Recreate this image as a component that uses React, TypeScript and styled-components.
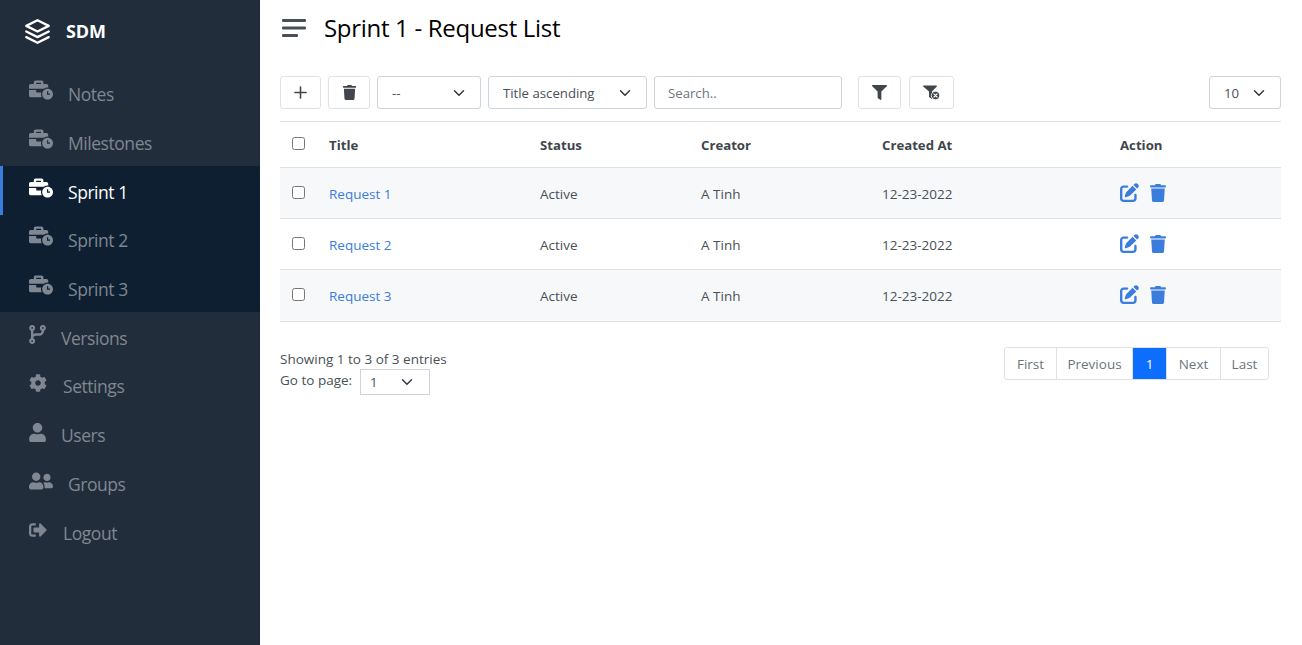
import React from "react";
import styled, { createGlobalStyle } from "styled-components";
import {
	FaBusinessTime,
	FaCog,
	FaFilter,
	FaSignOutAlt,
	FaTrash,
	FaUser,
	FaUserFriends,
} from "react-icons/fa";
import { FaCodeBranch, FaPenToSquare } from "react-icons/fa6";
import { FiLayers, FiPlus } from "react-icons/fi";

const chevron = `url("data:image/svg+xml,%3csvg xmlns='http://www.w3.org/2000/svg' viewBox='0 0 16 16'%3e%3cpath fill='none' stroke='%23343a40' stroke-linecap='round' stroke-linejoin='round' stroke-width='2' d='m2 5 6 6 6-6'/%3e%3c/svg%3e")`;

const GlobalStyle = createGlobalStyle`
	html, body {
		margin: 0;
		padding: 0;
		height: 100%;
		background: #fff;
	}
	body {
		font-family: "Open Sans", "Noto Sans", sans-serif;
		font-size: 13.5px;
		color: #495057;
	}
	* {
		box-sizing: border-box;
	}
`;

const Layout = styled.div`
	display: flex;
	height: 645px;
	overflow: hidden;
`;

const Sidebar = styled.nav`
	width: 260px;
	flex-shrink: 0;
	background: #222d3b;
	display: flex;
	flex-direction: column;
`;

const Brand = styled.div`
	height: 69px;
	padding: 0 0 7px 24px;
	display: flex;
	align-items: center;
	gap: 15px;
	color: #fff;
	font-size: 18px;
	font-weight: 700;
	letter-spacing: -0.1px;
	svg {
		width: 27px;
		height: 27px;
	}
`;

const SubMenu = styled.div`
	background: #0d1f30;
`;

const MenuItem = styled.a<{ $active?: boolean; $gap: number; $inset?: number }>`
	height: 48.7px;
	padding: 2px 0 0 ${(p) => p.$inset ?? 29}px;
	display: flex;
	align-items: center;
	gap: ${(p) => p.$gap}px;
	font-size: 17.5px;
	letter-spacing: -0.45px;
	color: ${(p) => (p.$active ? "#fff" : "#7f8792")};
	box-shadow: ${(p) => (p.$active ? "inset 3px 0 0 #3b7ddd" : "none")};
	svg {
		flex-shrink: 0;
		position: relative;
		top: -3px;
	}
`;

const BriefcaseIcon = styled(FaBusinessTime)`
	margin-top: -2px;
`;

const Main = styled.main`
	flex: 1;
	min-width: 0;
	padding: 0 21px 0 20px;
`;

const PageHeader = styled.header`
	height: 76px;
	padding: 0 0 21px 2px;
	display: flex;
	align-items: center;
	gap: 18px;
`;

const Hamburger = styled.svg`
	width: 24px;
	height: 18px;
	flex-shrink: 0;
`;

const PageTitle = styled.h1`
	margin: 0;
	font-size: 24px;
	font-weight: 400;
	letter-spacing: -0.3px;
	color: #000;
`;

const Toolbar = styled.div`
	height: 45px;
	display: flex;
	align-items: flex-start;
	gap: 7px;
`;

const IconButton = styled.button<{ $width: number }>`
	width: ${(p) => p.$width}px;
	height: 33px;
	padding: 0;
	display: flex;
	align-items: center;
	justify-content: center;
	background: #fff;
	border: 1px solid #dee2e6;
	border-radius: 3px;
	color: #41464d;
`;

const FilterGroup = styled.div`
	display: flex;
	gap: 8px;
	margin-left: 9px;
`;

const Select = styled.select<{ $width: number }>`
	appearance: none;
	width: ${(p) => p.$width}px;
	height: 33px;
	padding: 0 14px;
	background: #fff ${chevron} no-repeat right 15px center / 12px 12px;
	border: 1px solid #ced4da;
	border-radius: 3px;
	font-family: inherit;
	font-size: 13.2px;
	color: #495057;
`;

const SearchInput = styled.input`
	width: 188px;
	height: 33px;
	padding: 0 13px;
	border: 1px solid #ced4da;
	border-radius: 3px;
	font-family: inherit;
	font-size: 13.2px;
	color: #495057;
	&::placeholder {
		color: #6c757d;
		opacity: 1;
	}
`;

const PageSize = styled(Select)`
	margin-left: auto;
`;

const Table = styled.table`
	width: 100%;
	table-layout: fixed;
	border-collapse: collapse;
	border-top: 1px solid #dee2e6;
`;

const HeadCell = styled.th`
	height: 46px;
	padding: 0 12px;
	text-align: left;
	font-size: 13.2px;
	font-weight: 700;
	color: #3f454c;
	border-bottom: 1px solid #dee2e6;
`;

const Cell = styled.td`
	height: 51px;
	padding: 2px 12px 0;
	color: #495057;
	border-bottom: 1px solid #dee2e6;
`;

const Row = styled.tr<{ $striped?: boolean }>`
	background: ${(p) => (p.$striped ? "#f7f8fa" : "#fff")};
	&:last-child ${Cell} {
		height: 52px;
		padding: 1px 12px 0;
	}
`;

const CheckBox = styled.input`
	display: block;
	width: 13px;
	height: 13px;
	margin: -3px 0 0 0;
`;

const RequestLink = styled.a`
	color: #3b7ddd;
	text-decoration: none;
`;

const Actions = styled.div`
	display: flex;
	align-items: center;
	gap: 10px;
	color: #3b7ddd;
	margin-top: -3px;
`;

const Footer = styled.div`
	display: flex;
	justify-content: space-between;
	align-items: flex-start;
	padding: 25px 12px 0 0;
`;

const Info = styled.div`
	padding-top: 3px;
	line-height: 18px;
`;

const GoTo = styled.div`
	display: flex;
	align-items: center;
	gap: 8px;
	margin-top: 1px;
`;

const GoToLabel = styled.span`
	padding-bottom: 4px;
`;

const SmallSelect = styled(Select)`
	height: 26px;
	padding: 0 9px;
	background-position: right 16px center;
	border-radius: 0;
`;

const Pager = styled.div`
	display: flex;
	height: 33px;
	border: 1px solid #dee2e6;
	border-radius: 3px;
`;

const PageLink = styled.a<{ $active?: boolean; $width: number }>`
	width: ${(p) => p.$width}px;
	padding-top: 1px;
	display: flex;
	align-items: center;
	justify-content: center;
	color: ${(p) => (p.$active ? "#fff" : "#6c757d")};
	background: ${(p) => (p.$active ? "#0d6efd" : "transparent")};
	& + & {
		border-left: ${(p) => (p.$active ? "none" : "1px solid #dee2e6")};
	}
`;

const ClearFilterIcon = () => (
	<svg width="17" height="15" viewBox="0 0 17 15">
		<path d="M0.6 0.5h12.8c.5 0 .7.5.4.9L9 6.6V14L6 12V6.6L.2 1.4C-.1 1 .1.5.6.5z" fill="#41464d" />
		<circle cx="12.5" cy="10.5" r="4.2" fill="#41464d" stroke="#fff" strokeWidth="0.8" />
		<path d="M11 9l3 3M14 9l-3 3" stroke="#fff" strokeWidth="1.1" strokeLinecap="round" />
	</svg>
);

const topMenu = ["Notes", "Milestones"];

const sprints = ["Sprint 1", "Sprint 2", "Sprint 3"];

const bottomMenu = [
	{ label: "Versions", icon: <FaCodeBranch size={19} />, gap: 14, inset: 28 },
	{ label: "Settings", icon: <FaCog size={18} />, gap: 16, inset: 29 },
	{ label: "Users", icon: <FaUser size={19} />, gap: 14, inset: 28 },
	{ label: "Groups", icon: <FaUserFriends size={24} />, gap: 15, inset: 29 },
	{ label: "Logout", icon: <FaSignOutAlt size={18} />, gap: 16, inset: 29 },
];

const requests = ["Request 1", "Request 2", "Request 3"];

const App = () => {
	return (
		<Layout>
			<GlobalStyle />
			<Sidebar>
				<Brand>
					<FiLayers />
					SDM
				</Brand>
				{topMenu.map((label) => (
					<MenuItem key={label} $gap={15}>
						<BriefcaseIcon size={24} />
						{label}
					</MenuItem>
				))}
				<SubMenu>
					{sprints.map((name, i) => (
						<MenuItem key={name} $gap={15} $active={i === 0}>
							<BriefcaseIcon size={24} />
							{name}
						</MenuItem>
					))}
				</SubMenu>
				{bottomMenu.map((item) => (
					<MenuItem key={item.label} $gap={item.gap} $inset={item.inset}>
						{item.icon}
						{item.label}
					</MenuItem>
				))}
			</Sidebar>
			<Main>
				<PageHeader>
					<Hamburger viewBox="0 0 24 18">
						<rect y="0" width="24" height="3" rx="1" fill="#495057" />
						<rect y="7.5" width="24" height="3" rx="1" fill="#495057" />
						<rect y="15" width="16" height="3" rx="1" fill="#495057" />
					</Hamburger>
					<PageTitle>Sprint 1 - Request List</PageTitle>
				</PageHeader>
				<Toolbar>
					<IconButton $width={41}>
						<FiPlus size={19} />
					</IconButton>
					<IconButton $width={42}>
						<FaTrash size={15} />
					</IconButton>
					<Select $width={104}>
						<option>--</option>
					</Select>
					<Select $width={159}>
						<option>Title ascending</option>
					</Select>
					<SearchInput placeholder="Search.." />
					<FilterGroup>
						<IconButton $width={43}>
							<FaFilter size={15} />
						</IconButton>
						<IconButton $width={45}>
							<ClearFilterIcon />
						</IconButton>
					</FilterGroup>
					<PageSize $width={72}>
						<option>10</option>
					</PageSize>
				</Toolbar>
				<Table>
					<colgroup>
						<col width={37} />
						<col width={211} />
						<col width={161} />
						<col width={181} />
						<col width={238} />
						<col width={173} />
					</colgroup>
					<thead>
						<tr>
							<HeadCell>
								<CheckBox type="checkbox" />
							</HeadCell>
							<HeadCell>Title</HeadCell>
							<HeadCell>Status</HeadCell>
							<HeadCell>Creator</HeadCell>
							<HeadCell>Created At</HeadCell>
							<HeadCell>Action</HeadCell>
						</tr>
					</thead>
					<tbody>
						{requests.map((title, i) => (
							<Row key={title} $striped={i % 2 === 0}>
								<Cell>
									<CheckBox type="checkbox" />
								</Cell>
								<Cell>
									<RequestLink>{title}</RequestLink>
								</Cell>
								<Cell>Active</Cell>
								<Cell>A Tinh</Cell>
								<Cell>12-23-2022</Cell>
								<Cell>
									<Actions>
										<FaPenToSquare size={19} />
										<FaTrash size={18} />
									</Actions>
								</Cell>
							</Row>
						))}
					</tbody>
				</Table>
				<Footer>
					<Info>
						<div>Showing 1 to 3 of 3 entries</div>
						<GoTo>
							<GoToLabel>Go to page:</GoToLabel>
							<SmallSelect $width={70}>
								<option>1</option>
							</SmallSelect>
						</GoTo>
					</Info>
					<Pager>
						<PageLink $width={51}>First</PageLink>
						<PageLink $width={76}>Previous</PageLink>
						<PageLink $width={34} $active>
							1
						</PageLink>
						<PageLink $width={54}>Next</PageLink>
						<PageLink $width={48}>Last</PageLink>
					</Pager>
				</Footer>
			</Main>
		</Layout>
	);
};

export default App;
